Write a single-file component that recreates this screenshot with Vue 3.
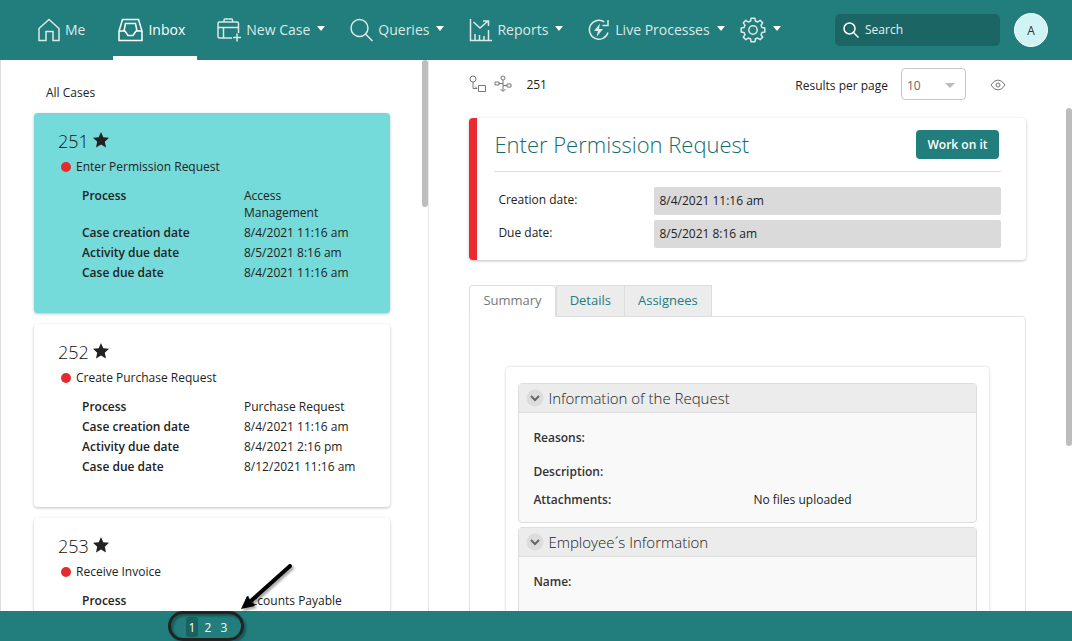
<script setup>
import { ref } from 'vue'

const navItems = [
  { id: 'me', label: 'Me', menu: false },
  { id: 'inbox', label: 'Inbox', menu: false },
  { id: 'new', label: 'New Case', menu: true },
  { id: 'queries', label: 'Queries', menu: true },
  { id: 'reports', label: 'Reports', menu: true },
  { id: 'live', label: 'Live Processes', menu: true },
  { id: 'admin', label: '', menu: true },
]
const activeNav = ref('inbox')

const cases = [
  {
    number: 251,
    task: 'Enter Permission Request',
    fields: [
      ['Process', 'Access Management'],
      ['Case creation date', '8/4/2021 11:16 am'],
      ['Activity due date', '8/5/2021 8:16 am'],
      ['Case due date', '8/4/2021 11:16 am'],
    ],
  },
  {
    number: 252,
    task: 'Create Purchase Request',
    fields: [
      ['Process', 'Purchase Request'],
      ['Case creation date', '8/4/2021 11:16 am'],
      ['Activity due date', '8/4/2021 2:16 pm'],
      ['Case due date', '8/12/2021 11:16 am'],
    ],
  },
  {
    number: 253,
    task: 'Receive Invoice',
    fields: [['Process', 'Accounts Payable']],
  },
]
const selectedCase = ref(251)

const tabs = ['Summary', 'Details', 'Assignees']
const activeTab = ref('Summary')

const sections = [
  {
    title: 'Information of the Request',
    rows: [
      { label: 'Reasons:', value: '', tall: true },
      { label: 'Description:', value: '' },
      { label: 'Attachments:', value: 'No files uploaded' },
    ],
  },
  {
    title: 'Employee´s Information',
    rows: [{ label: 'Name:', value: '', tall: true }],
  },
]

const pages = [1, 2, 3]
const page = ref(1)
const perPage = ref('10')
const search = ref('')
</script>

<template>
  <div class="app">
    <header class="topbar">
      <nav class="nav">
        <a
          v-for="item in navItems"
          :key="item.id"
          href="#"
          class="nav-item"
          :class="{ active: item.id === activeNav, menu: item.menu }"
          :aria-label="item.label || 'Admin'"
          @click.prevent="activeNav = item.id"
        >
          <svg v-if="item.id === 'me'" class="icon" width="22" height="24" viewBox="0 0 22 24">
            <path d="M1 10.500 11 1.500l10 9V22.500h-6v-9h-7v9H1z" />
          </svg>
          <svg v-else-if="item.id === 'inbox'" class="icon" width="25" height="24" viewBox="0 0 25 24">
            <path d="M4.500 1.500h16L24 13v9.500H1V13z" />
            <path d="M1 13h6l3 4.500h5l3-4.500h6" />
            <path d="M6 13l1.500-7.500h10L19 13" />
          </svg>
          <svg v-else-if="item.id === 'new'" class="icon" width="24" height="24" viewBox="0 0 24 24">
            <path d="M15 20H2.500Q1 20 1 18.500V5.500Q1 4 2.500 4h17.500q1.500 0 1.500 1.500V15M1 9.500h20.500M6.500 9.500V20M7 4V2q0-1 1-1h6.500q1 0 1 1v2" />
            <path d="M20 15.500v8M16 19.500h8" />
          </svg>
          <svg v-else-if="item.id === 'queries'" class="icon" width="23" height="24" viewBox="0 0 23 24">
            <circle cx="9.500" cy="10" r="8.500" />
            <path d="m15.500 16 7 7" />
          </svg>
          <svg v-else-if="item.id === 'reports'" class="icon" width="23" height="24" viewBox="0 0 23 24">
            <path d="M1.500 1v21.500H23M6 22v-6M10.500 22v-5M15 22v-4M19.500 22V12M4.500 4l6.500 6 8-7M14 3h5.500v5" />
          </svg>
          <svg v-else-if="item.id === 'live'" class="icon" width="22" height="24" viewBox="0 0 22 24">
            <path d="M16.500 4A9.500 9.500 0 1 0 20 14.500M20 2v5.500h-5.500" />
            <path class="solid" d="m12 5.500-6 7.500h4l-1.500 6 6.500-8h-4z" />
          </svg>
          <svg v-else class="icon" width="26" height="26" viewBox="0 0 26 26">
            <circle cx="13" cy="13" r="4.200" />
            <path stroke-linejoin="round" d="m10.600 4 .5-2.800h3.800l.5 2.800 2.300 1 2.400-1.700 2.600 2.600L21 8.300l1 2.300 2.800.5v3.800l-2.800.5-1 2.300 1.700 2.400-2.600 2.600-2.400-1.700-2.300 1-.5 2.800h-3.800l-.5-2.800-2.300-1-2.400 1.700-2.600-2.600L5 17.700l-1-2.300-2.800-.5v-3.800l2.800-.5 1-2.300-1.700-2.400 2.600-2.600L8.300 5z" />
          </svg>
          <span v-if="item.label" class="nav-label">{{ item.label }}</span>
          <svg v-if="item.menu" class="caret" width="8" height="5" viewBox="0 0 8 5"><path d="M0 0h8L4 5z" /></svg>
        </a>
      </nav>
      <label class="search">
        <svg width="16" height="16" viewBox="0 0 16 16">
          <circle cx="6.500" cy="6.500" r="5.500" />
          <path d="m10.500 10.500 5 5" />
        </svg>
        <input v-model="search" type="text" placeholder="Search" aria-label="Search" />
      </label>
      <button class="avatar" type="button">A</button>
    </header>

    <main class="content">
      <section class="list">
        <h2 class="list-title">All Cases</h2>
        <article
          v-for="c in cases"
          :key="c.number"
          class="case"
          :class="{ selected: c.number === selectedCase }"
          @click="selectedCase = c.number"
        >
          <h3 class="case-number">
            {{ c.number }}
            <svg width="16" height="16" viewBox="0 0 16 16">
              <path d="m8 0 2.300 5.200 5.700.6-4.200 3.900 1.200 5.800-5-3-5 3 1.200-5.800L0 5.800l5.700-.6z" />
            </svg>
          </h3>
          <p class="case-task"><span class="dot"></span>{{ c.task }}</p>
          <dl class="fields">
            <template v-for="[name, value] in c.fields" :key="name">
              <dt>{{ name }}</dt>
              <dd>{{ value }}</dd>
            </template>
          </dl>
        </article>
        <div class="thumb list-thumb"></div>
      </section>

      <section class="detail">
        <div class="toolbar">
          <button class="tool" type="button" aria-label="Process path">
            <svg width="18" height="18" viewBox="0 0 18 18">
              <circle cx="4" cy="4" r="3" />
              <path d="M4 7v6.500h4M6 11.500l2 2M9.500 10.500h7v6h-7z" />
            </svg>
          </button>
          <button class="tool" type="button" aria-label="Process map">
            <svg width="18" height="18" viewBox="0 0 18 18">
              <circle cx="9" cy="3" r="2" />
              <path d="M9 5v11M6.500 14 9 16.500l2.500-2.500M5 8.500h4M9 10.500h4M1 7h4v3H1zM13 9h4v3h-4z" />
            </svg>
          </button>
          <span class="crumb">251</span>
          <label class="per-label" for="per-page">Results per page</label>
          <span class="select-box">
            <select id="per-page" v-model="perPage">
              <option>10</option>
              <option>20</option>
              <option>50</option>
            </select>
            <svg class="select-arrow" width="10" height="5" viewBox="0 0 10 5"><path d="M0 0h10L5 5z" /></svg>
          </span>
          <button class="tool eye" type="button" aria-label="Preview">
            <svg width="16" height="12" viewBox="0 0 16 12">
              <path d="M1 6q3-5 7-5t7 5q-3 5-7 5T1 6z" />
              <circle cx="8" cy="6" r="2" />
            </svg>
          </button>
        </div>

        <article class="summary-card">
          <div class="summary-head">
            <h1>Enter Permission Request</h1>
            <button class="work" type="button">Work on it</button>
          </div>
          <dl class="dates">
            <dt>Creation date:</dt>
            <dd>8/4/2021 11:16 am</dd>
            <dt>Due date:</dt>
            <dd>8/5/2021 8:16 am</dd>
          </dl>
        </article>

        <div class="tabs" role="tablist">
          <button
            v-for="t in tabs"
            :key="t"
            type="button"
            role="tab"
            class="tab"
            :class="{ current: t === activeTab }"
            :aria-selected="t === activeTab"
            @click="activeTab = t"
          >{{ t }}</button>
        </div>
        <div class="panel" role="tabpanel">
          <div class="form">
            <section v-for="s in sections" :key="s.title" class="group">
              <h2 class="group-title">
                <svg width="18" height="18" viewBox="0 0 18 18">
                  <circle cx="9" cy="9" r="8.500" />
                  <path d="m5 7 4 4 4-4" />
                </svg>
                {{ s.title }}
              </h2>
              <dl class="group-rows">
                <div v-for="r in s.rows" :key="r.label" class="group-row" :class="{ tall: r.tall }">
                  <dt>{{ r.label }}</dt>
                  <dd>{{ r.value }}</dd>
                </div>
              </dl>
            </section>
          </div>
        </div>
        <div class="thumb detail-thumb"></div>
      </section>
    </main>

    <footer class="footer">
      <nav class="pages" aria-label="Pages">
        <button
          v-for="p in pages"
          :key="p"
          type="button"
          :class="{ on: p === page }"
          @click="page = p"
        >{{ p }}</button>
        <svg class="callout" width="136" height="86" viewBox="0 0 136 86" aria-hidden="true">
          <rect x="6.500" y="53.500" width="73" height="27" rx="13.500" />
          <path class="shaft" d="M127 7 89 41" />
          <path class="head" d="m78 50 6-13 8 10z" />
        </svg>
      </nav>
    </footer>
  </div>
</template>

<style>
body {
  margin: 0;
}
</style>

<style scoped>
* {
  box-sizing: border-box;
}
.app {
  display: flex;
  flex-direction: column;
  height: 100vh;
  overflow: hidden;
  background: #fff;
  color: #222;
  font-family: "Open Sans", "Liberation Sans", sans-serif;
  font-size: 12px;
}
button, input, select {
  font: inherit;
  color: inherit;
}
button {
  padding: 0;
  border: 0;
  background: none;
  cursor: pointer;
}
h1, h2, h3, p, dl, dd {
  margin: 0;
  font-weight: 400;
}
svg {
  flex: none;
}

.topbar {
  display: flex;
  flex: none;
  align-items: center;
  height: 60px;
  padding: 0 24px 0 33px;
  background: #227d7d;
}
.nav {
  display: flex;
  align-self: stretch;
}
.nav-item {
  display: flex;
  align-items: center;
  margin-right: 16px;
  padding: 4px 12px 0 5px;
  border-bottom: 4px solid transparent;
  color: #dbe9e9;
  font-size: 14px;
  text-decoration: none;
  white-space: nowrap;
}
.nav-item.active {
  margin-right: 15px;
  border-color: #fff;
  color: #fff;
}
.nav-item.menu {
  margin-right: 8px;
}
.nav-item.menu:nth-last-child(2) {
  margin-right: -2px;
}
.icon {
  fill: none;
  stroke: currentColor;
  stroke-width: 1.5;
}
.solid {
  fill: currentColor;
  stroke: none;
}
.nav-label {
  margin: 0 0 2px 5px;
}
.caret {
  margin: -3px 0 0 7px;
  fill: #fff;
}
.search {
  display: flex;
  align-items: center;
  gap: 6px;
  width: 165px;
  height: 32px;
  margin-left: auto;
  padding: 0 8px;
  border-radius: 5px;
  background: #1c6565;
  color: #e4efef;
}
.search svg {
  fill: none;
  stroke: #fff;
  stroke-width: 1.500;
}
.search input {
  width: 100%;
  min-width: 0;
  padding: 0 0 1px;
  border: 0;
  outline: 0;
  background: none;
}
.search input::placeholder {
  color: inherit;
  opacity: 1;
}
.avatar {
  flex: none;
  width: 34px;
  height: 34px;
  margin-left: 14px;
  border: 1px solid #fff;
  border-radius: 50%;
  background: #d0f3f3;
  color: #333;
}

.content {
  display: flex;
  flex: 1;
  min-height: 0;
  border-left: 1px solid #ddd;
}
.list {
  position: relative;
  width: 40%;
  padding: 24px 38px 0 33px;
  overflow: hidden;
  border-right: 1px solid #e9e9e9;
}
.list-title {
  margin: 0 0 11px 12px;
  font-size: 12px;
  line-height: 18px;
}
.case {
  margin-bottom: 11px;
  padding: 16px 32px 29px 24px;
  border-radius: 4px;
  background: #fff;
  box-shadow: 0 1px 3px rgba(0, 0, 0, 0.25);
}
.case.selected {
  background: #75dada;
}
.case-number {
  display: flex;
  align-items: center;
  gap: 4px;
  color: #111;
  font-size: 18px;
  font-weight: 300;
  line-height: 24px;
}
.case-number svg {
  margin-bottom: 2px;
  fill: #222;
}
.case-task {
  display: flex;
  align-items: center;
  margin: 4px 0 10px 3px;
  line-height: 20px;
}
.dot {
  width: 10px;
  height: 10px;
  margin-right: 5px;
  border-radius: 50%;
  background: #e52b2b;
}
.fields {
  display: grid;
  grid-template-columns: 162px 1fr;
  row-gap: 3px;
  margin-left: 24px;
  padding-bottom: 3px;
  line-height: 17px;
}
.fields dt {
  font-weight: 600;
}
.thumb {
  position: absolute;
  right: 0;
  width: 6px;
  border-radius: 3px;
  background: #bdbdbd;
}
.list-thumb {
  top: 0;
  height: 147px;
}
.detail-thumb {
  top: 48px;
  height: 338px;
}

.detail {
  position: relative;
  flex: 1;
  padding: 8px 46px 0 40px;
  overflow: hidden;
}
.toolbar {
  display: flex;
  align-items: center;
  height: 32px;
  margin-bottom: 18px;
}
.tool {
  display: flex;
  margin-right: 7px;
}
.tool svg {
  fill: none;
  stroke: #777;
}
.crumb {
  margin-left: 7px;
}
.per-label {
  margin: 2px 0 0 auto;
}
.select-box {
  position: relative;
  width: 65px;
  height: 32px;
  margin-left: 13px;
}
.select-box select {
  width: 100%;
  height: 100%;
  padding: 2px 5px 0;
  appearance: none;
  border: 1px solid #c4c4c4;
  border-radius: 4px;
  background: #fff;
  color: #666;
}
.select-arrow {
  position: absolute;
  top: 15px;
  right: 11px;
  fill: #bbb;
  pointer-events: none;
}
.eye {
  margin: 2px 20px 0 24px;
}

.summary-card {
  padding: 0 25px 12px 17px;
  border-left: 8px solid #ec2a2f;
  border-radius: 4px;
  box-shadow: 0 1px 3px rgba(0, 0, 0, 0.25);
}
.summary-head {
  display: flex;
  align-items: center;
  justify-content: space-between;
  height: 54px;
  padding-right: 2px;
  border-bottom: 1px solid #ddd;
}
.summary-head h1 {
  padding-bottom: 1px;
  color: #146c6c;
  font-size: 22px;
  font-weight: 300;
  line-height: 30px;
}
.work {
  width: 83px;
  height: 29px;
  border-radius: 4px;
  background: #227d7d;
  color: #fff;
  font-weight: 600;
}
.dates {
  display: grid;
  grid-template-columns: 160px 1fr;
  row-gap: 5px;
  padding-top: 15px;
  line-height: 28px;
}
.dates dt {
  padding-left: 4px;
  line-height: 26px;
}
.dates dd {
  padding-left: 5px;
  border-radius: 2px;
  background: #dadada;
}

.tabs {
  display: flex;
  height: 32px;
  margin: 25px 0 -1px;
}
.tab {
  position: relative;
  padding: 0 13px 2px;
  border: 1px solid #ddd;
  background: #ececec;
  color: #227d7d;
  font-size: 13px;
}
.tab.current {
  border-color: #ddd #ddd #fff;
  border-radius: 4px 4px 0 0;
  background: #fff;
  color: #777;
}
.tab:last-child {
  margin-left: -1px;
}
.panel {
  padding: 50px 36px;
  border: 1px solid #e3e3e3;
  border-radius: 0 4px 0 0;
}
.form {
  padding: 16px 12px;
  border-radius: 4px;
  box-shadow: 0 0 3px rgba(0, 0, 0, 0.2);
}
.group {
  margin-bottom: 4px;
  border: 1px solid #ddd;
  border-radius: 4px;
  background: #f9f9f9;
}
.group-title {
  display: flex;
  align-items: center;
  gap: 4px;
  height: 29px;
  padding-left: 7px;
  border-bottom: 1px solid #ddd;
  background: #ececec;
  color: #222;
  font-size: 15px;
  font-weight: 300;
}
.group-title circle {
  fill: #dcdcdc;
}
.group-title path {
  fill: none;
  stroke: #666;
  stroke-width: 2;
}
.group-rows {
  padding: 16px 14px 13px;
}
.group-row {
  display: grid;
  grid-template-columns: 220px 1fr;
  padding-bottom: 10px;
  line-height: 18px;
}
.group-row:last-child {
  padding-bottom: 0;
}
.group-row.tall {
  padding-bottom: 16px;
}
.group-row dt {
  color: #333;
  font-weight: 600;
}

.footer {
  flex: none;
  height: 30px;
  background: #227d7d;
}
.pages {
  position: relative;
  display: flex;
  align-items: center;
  gap: 4px;
  width: 40%;
  height: 100%;
  padding: 2px 0 0 186px;
  color: #fff;
}
.pages button {
  width: 12px;
  height: 20px;
  border-radius: 3px;
}
.pages .on {
  background: #1a6161;
}
.callout {
  position: absolute;
  bottom: -4px;
  left: 163px;
  overflow: visible;
  fill: none;
  filter: drop-shadow(2px 2px 1px rgba(0, 0, 0, 0.35));
  pointer-events: none;
}
.callout rect {
  stroke: #222;
  stroke-width: 3;
}
.shaft {
  stroke: #000;
  stroke-width: 4;
  stroke-linecap: round;
}
.head {
  fill: #000;
}
</style>
